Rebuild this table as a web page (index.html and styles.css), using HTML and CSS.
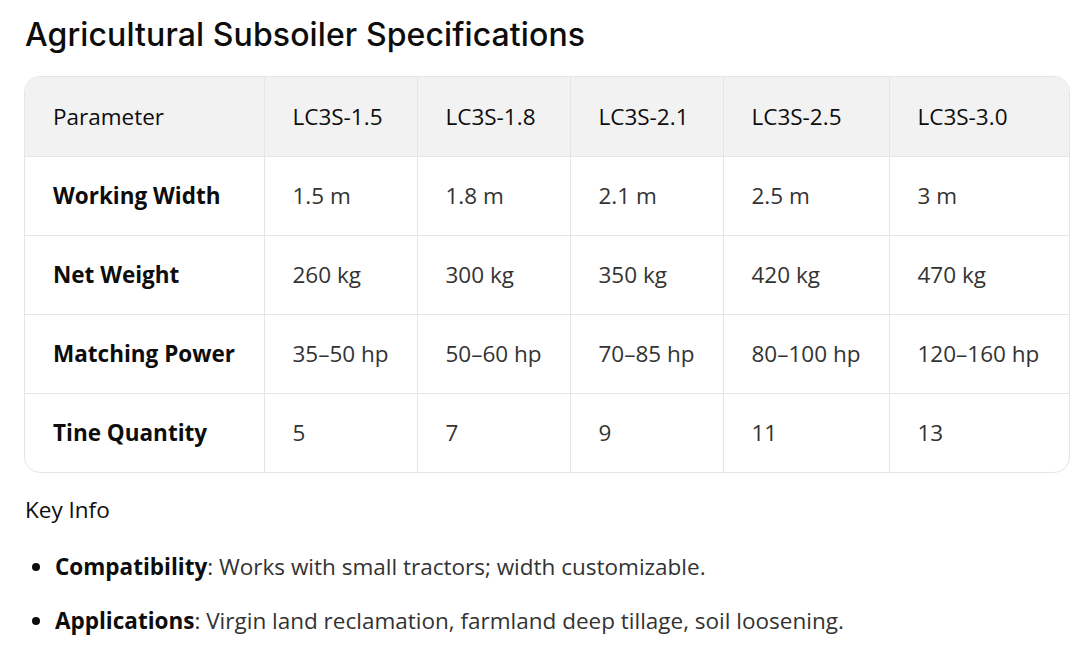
FILE: index.html
```html
<!DOCTYPE html>
<html lang="en">
<head>
<meta charset="utf-8">
<link rel="stylesheet" href="styles.css">
</head>
<body>
<main class="page">
  <h1 class="title">Agricultural Subsoiler Specifications</h1>
  <div class="table-wrap">
    <table class="spec">
      <thead>
        <tr>
          <th>Parameter</th>
          <th>LC3S-1.5</th>
          <th>LC3S-1.8</th>
          <th>LC3S-2.1</th>
          <th>LC3S-2.5</th>
          <th>LC3S-3.0</th>
        </tr>
      </thead>
      <tbody>
        <tr>
          <td class="label">Working Width</td>
          <td>1.5 m</td><td>1.8 m</td><td>2.1 m</td><td>2.5 m</td><td>3 m</td>
        </tr>
        <tr>
          <td class="label">Net Weight</td>
          <td>260 kg</td><td>300 kg</td><td>350 kg</td><td>420 kg</td><td>470 kg</td>
        </tr>
        <tr>
          <td class="label">Matching Power</td>
          <td>35–50 hp</td><td>50–60 hp</td><td>70–85 hp</td><td>80–100 hp</td><td>120–160 hp</td>
        </tr>
        <tr>
          <td class="label">Tine Quantity</td>
          <td>5</td><td>7</td><td>9</td><td>11</td><td>13</td>
        </tr>
      </tbody>
    </table>
  </div>
  <p class="key">Key Info</p>
  <ul class="info">
    <li><strong>Compatibility</strong>: Works with small tractors; width customizable.</li>
    <li><strong>Applications</strong>: Virgin land reclamation, farmland deep tillage, soil loosening.</li>
  </ul>
</main>
</body>
</html>
```

FILE: styles.css
```css
* { box-sizing: border-box; }
html, body { margin: 0; padding: 0; background: #fff; }
body {
  font-family: "Open Sans", "Noto Sans", sans-serif;
  color: #1a1a1a;
}
.page { padding: 13px 20px 0 24px; }
.title {
  font-family: "Inter", "Lato", sans-serif;
  font-weight: 500;
  font-size: 32px;
  line-height: 44px;
  margin: 0 0 19px 1px;
  color: #0d0d0d;
  letter-spacing: 0.1px;
}
.table-wrap {
  border: 1px solid #e5e5e5;
  border-radius: 16px;
  overflow: hidden;
  width: 1046px;
}
.spec {
  border-collapse: collapse;
  width: 100%;
  table-layout: fixed;
  font-size: 22.5px;
}
.spec th, .spec td {
  height: 79px;
  padding: 0 6px 0 28px;
  text-align: left;
  vertical-align: middle;
  border-left: 1px solid #e5e5e5;
  border-top: 1px solid #e5e5e5;
  white-space: nowrap;
}
.spec th:first-child, .spec td:first-child { border-left: none; width: 239px; }
.spec th:nth-child(2), .spec th:nth-child(3), .spec th:nth-child(4) { width: 153px; }
.spec th:nth-child(5) { width: 166px; }
.spec thead tr th { border-top: none; }
.spec thead { background: #f2f2f2; }
.spec th { font-weight: 400; color: #0d0d0d; }
.spec td { color: #333; }
.spec td.label { font-weight: 700; color: #0d0d0d; }
.key {
  font-size: 22.5px;
  margin: 21px 0 0 1px;
  line-height: 32px;
  color: #0d0d0d;
}
.info {
  margin: 25px 0 0 0;
  padding: 0 0 0 31px;
  font-size: 22.5px;
  color: #333;
}
.info li { line-height: 32px; margin-bottom: 22px; }
.info li::marker { color: #0d0d0d; }
.info strong { color: #0d0d0d; font-weight: 700; }
```
